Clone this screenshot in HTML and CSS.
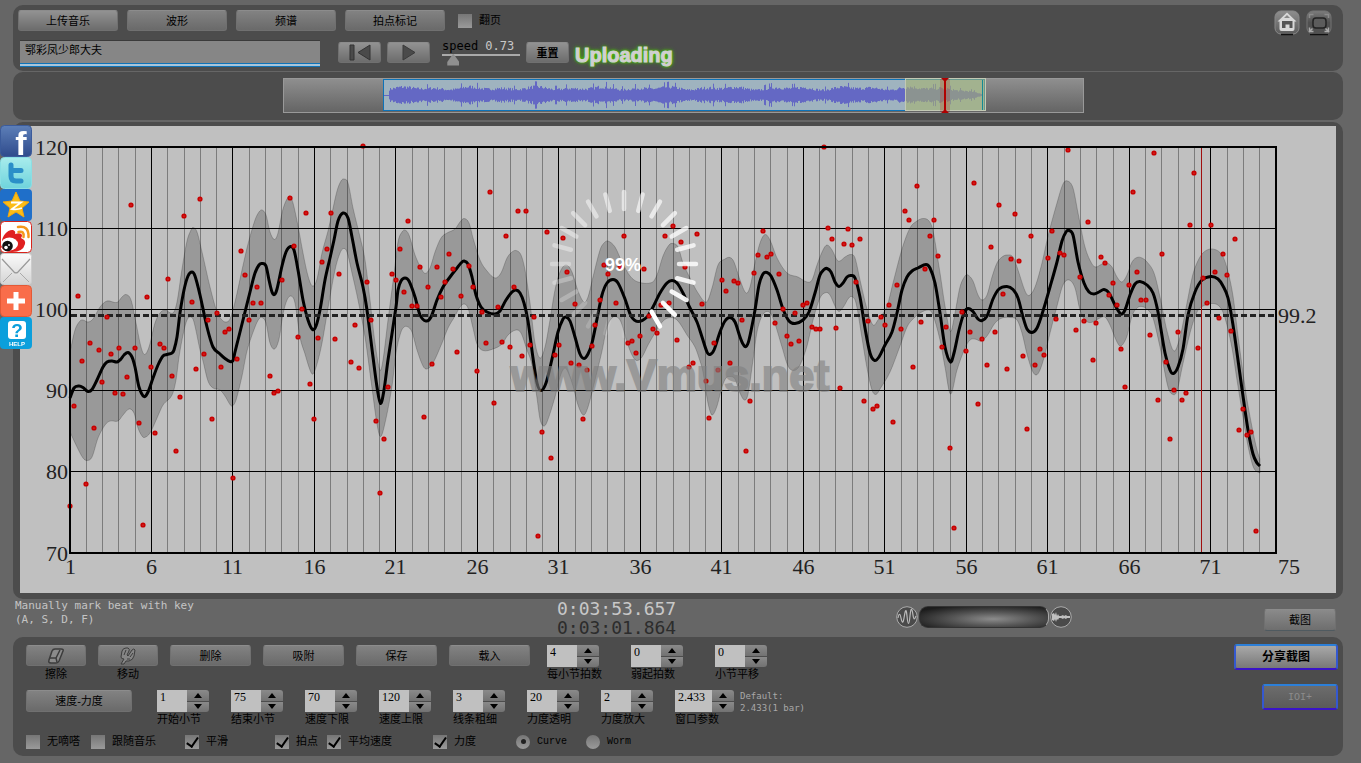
FILE: index.html
```html
<!DOCTYPE html>
<html lang="zh-CN">
<head>
  <meta charset="UTF-8">
  <title>Vmus.net</title>
  <link rel="stylesheet" href="styles.css">
</head>
<body>

<header class="panel toolbar">
  <div class="toolbar-main">
    <div class="toolbar-row">
      <button class="btn wide lit">上传音乐</button>
      <button class="btn wide">波形</button>
      <button class="btn wide">频谱</button>
      <button class="btn wide">拍点标记</button>
      <label class="check flip"><input type="checkbox">翻页</label>
    </div>
    <div class="toolbar-row second">
      <input class="track-name" type="text" value="鄂彩凤少郎大夫" aria-label="曲名">
      <div class="transport">
        <button class="btn small" aria-label="回到开头">
          <svg width="22" height="17" viewBox="0 0 22 17"><path d="M1 1h4v15h-4zM21 1v15L9 8.500z" fill="#4a4a4a" stroke="#333" stroke-width="1"/></svg>
        </button>
        <button class="btn small" aria-label="播放">
          <svg width="14" height="17" viewBox="0 0 14 17"><path d="M1 1v15L13 8.500z" fill="#4a4a4a" stroke="#3a3a3a"/></svg>
        </button>
      </div>
      <div class="speed">
        <label for="speed">speed <output>0.73</output></label>
        <input type="range" id="speed" min="0" max="100" value="8">
      </div>
      <button class="btn small bold">重置</button>
      <span class="uploading">Uploading</span>
    </div>
  </div>
  <div class="toolbar-icons">
    <button class="icon-btn" aria-label="主页">
      <svg width="26" height="26" viewBox="0 0 26 26">
        <defs><linearGradient id="gHome" x1="0" y1="0" x2="0" y2="1"><stop offset="0" stop-color="#8e8e8e"/><stop offset="1" stop-color="#5c5c5c"/></linearGradient></defs>
        <rect x="1" y="1" width="24" height="23" rx="6" fill="url(#gHome)" stroke="#888"/>
        <path d="M7 24.500h12" stroke="#111" stroke-width="1.500"/>
        <path d="M13 2.500L3.500 11.500h2v7.500q0 2 2 2h11q2 0 2-2v-7.500h2z" fill="#d8d8d8"/>
        <path d="M8 18v-7h10.500v7h-3v-3.500h-4v3.500z" fill="#555"/>
        <path d="M10 8l3-3 3 3z" fill="#888"/>
      </svg>
    </button>
    <button class="icon-btn" aria-label="全屏">
      <svg width="26" height="26" viewBox="0 0 26 26">
        <defs><linearGradient id="gFull" x1="0" y1="0" x2="0" y2="1"><stop offset="0" stop-color="#7c7c7c"/><stop offset="0.500" stop-color="#505050"/></linearGradient></defs>
        <rect x="1" y="1" width="24" height="23" rx="6" fill="url(#gFull)" stroke="#747474"/>
        <path d="M4 24.500h18" stroke="#111" stroke-width="1.500"/>
        <rect x="7" y="8" width="13" height="10" rx="3" fill="#5c5c5c" stroke="#222" stroke-width="1.500"/>
        <path d="M3.500 8V4.500h4M18.500 4.500h4V8" stroke="#8c8c8c" stroke-width="1.500" fill="none"/>
        <path d="M3.500 17.500v4h4M18.500 21.500h4v-4M3.500 21.500l3-3M22.500 21.500l-3-3" stroke="#aaa" stroke-width="1.500" fill="none"/>
      </svg>
    </button>
  </div>
</header>

<section class="panel overview">
  <svg id="overview" viewBox="0 0 801 35">
    <defs>
      <linearGradient id="gView" x1="0" y1="0" x2="0" y2="1"><stop offset="0" stop-color="#8f8f8f"/><stop offset="1" stop-color="#646464"/></linearGradient>
    </defs>
    <rect x="0.500" y="0.500" width="800" height="34" fill="url(#gView)" stroke="#999"/>
    <rect x="100.500" y="1.500" width="601" height="31" fill="#9fb3bf" stroke="#0e73b8"/>
    <path id="wave" stroke="#6468c4" stroke-width="1" fill="none"/>
    <rect x="622.500" y="0.500" width="80" height="32" fill="#a5b070" fill-opacity="0.600" stroke="#c3c9b4"/>
    <path d="M699.500 2v30" stroke="#128a96" stroke-width="1"/>
    <rect x="657" y="1" width="10" height="33" fill="#b00" fill-opacity="0.180"/>
    <path d="M658 0h8l-3 3v29l3 3h-8l3-3v-29z" fill="#b00000"/>
  </svg>
</section>

<main class="panel chart-panel">
  <svg id="chart" viewBox="20 126 1316 467">
    <g id="grid"></g>
    <path id="band"></path>
    <path id="mean"></path>
    <path class="average" d="M71 315.500H1276"/>
    <text class="axis" x="1278" y="323">99.2</text>
    <g id="beats"></g>
    <text class="watermark" x="670" y="391">www.Vmus.net</text>
    <path class="playhead" d="M1201.500 147V552"/>
    <rect class="frame" x="70" y="147" width="1206" height="406"/>
    <g id="spinner"></g>
    <text class="percent" x="623" y="271">99%</text>
  </svg>
</main>

<section class="status">
  <p class="hint">Manually mark beat with key<br>(A, S, D, F)</p>
  <p class="clock">0:03:53.657<br><span>0:03:01.864</span></p>
  <div class="zoomer">
    <svg width="22" height="22" viewBox="0 0 22 22"><circle cx="11" cy="11" r="10.300" fill="#4a4a4a" stroke="#aaa"/><path d="M2 12c1-5 2-5 3 0s2 6 3 0 2-12 3-2 2 10 3 0 2-8 3-1 2 3 3 1" fill="none" stroke="#bbb" stroke-width="1.200"/></svg>
    <div class="drum"></div>
    <svg width="22" height="22" viewBox="0 0 22 22"><circle cx="11" cy="11" r="10.300" fill="#4a4a4a" stroke="#aaa"/><path d="M2 8l2-1 1 2 1-3 1 4 1-2 1 2h2l2-1 1 1 2-1 1 1h3v2h-3l-1 1-2-1-1 1-2-1H9l-1 2-1-1-1 3-1-3-1 2-2-1z" fill="#c0c0c0"/></svg>
  </div>
  <button class="btn shot">截图</button>
</section>

<section class="panel controls">
  <div class="controls-main">
    <div class="row top">
      <div class="tool">
        <button class="btn" id="erase">
          <svg width="18" height="16" viewBox="0 0 18 16"><path d="M8 1h6q3 0 2 2l-4 10q-1 2-3 2H4q-3 0-2-3l3-9q1-2 3-2z" fill="#8a8a8a" stroke="#3c3c3c" stroke-width="1.500"/><path d="M3 10h6l4-8M9 10l1 4" fill="none" stroke="#3c3c3c" stroke-width="1.500"/></svg>
        </button>
        <label for="erase">擦除</label>
      </div>
      <div class="tool">
        <button class="btn" id="move">
          <svg width="18" height="18" viewBox="0 0 18 18"><path d="M2 17l3-5q-3 0-3-2l1-6q1-3 4-3h2q2 1 1 3L8 8l1 1 4-6q2-2 3 0l-1 6q-1 4-5 5H7l-2 3z" fill="#858585" stroke="#3c3c3c"/><path d="M5 8l2-5M11 10l3-4M8 12h3" stroke="#3c3c3c" fill="none"/></svg>
        </button>
        <label for="move">移动</label>
      </div>
      <button class="btn mid">删除</button>
      <button class="btn mid">吸附</button>
      <button class="btn mid">保存</button>
      <button class="btn mid">载入</button>
      <div class="fields first">
        <div class="field" data-id="beats-per-bar" data-value="4" data-label="每小节拍数"></div>
        <div class="field" data-id="upbeat" data-value="0" data-label="弱起拍数"></div>
        <div class="field" data-id="bar-shift" data-value="0" data-label="小节平移"></div>
      </div>
    </div>
    <div class="row">
      <button class="btn mode">速度-力度</button>
      <div class="fields">
        <div class="field" data-id="bar-start" data-value="1" data-label="开始小节"></div>
        <div class="field" data-id="bar-end" data-value="75" data-label="结束小节"></div>
        <div class="field" data-id="tempo-min" data-value="70" data-label="速度下限"></div>
        <div class="field" data-id="tempo-max" data-value="120" data-label="速度上限"></div>
        <div class="field" data-id="line-width" data-value="3" data-label="线条粗细"></div>
        <div class="field" data-id="alpha" data-value="20" data-label="力度透明"></div>
        <div class="field" data-id="gain" data-value="2" data-label="力度放大"></div>
        <div class="field long" data-id="window" data-value="2.433" data-label="窗口参数"></div>
      </div>
      <p class="default">Default:<br>2.433(1 bar)</p>
    </div>
    <div class="options">
      <label class="check"><input type="checkbox">无嘀嗒</label>
      <label class="check"><input type="checkbox">跟随音乐</label>
      <label class="check"><input type="checkbox" checked>平滑</label>
      <label class="check"><input type="checkbox" checked>拍点</label>
      <label class="check"><input type="checkbox" checked>平均速度</label>
      <label class="check"><input type="checkbox" checked>力度</label>
      <label class="check"><input type="radio" name="view" checked>Curve</label>
      <label class="check"><input type="radio" name="view">Worm</label>
    </div>
  </div>
  <div class="controls-side">
    <button class="btn share">分享截图</button>
    <button class="btn ioi" disabled>IOI+</button>
  </div>
</section>

<nav class="social">
  <a href="#" aria-label="Facebook"><svg viewBox="0 0 32 32"><defs><linearGradient id="gFb" x1="0" y1="0" x2="0" y2="1"><stop offset="0" stop-color="#5d7fb8"/><stop offset="1" stop-color="#2f4b8c"/></linearGradient></defs><rect x="0.500" y="0.500" width="31" height="31" rx="4" fill="url(#gFb)" stroke="#3b5b9b"/><text x="21" y="30" class="logo-f">f</text></svg></a>
  <a href="#" aria-label="Twitter"><svg viewBox="0 0 32 32"><defs><linearGradient id="gTw" x1="0" y1="0" x2="0" y2="1"><stop offset="0" stop-color="#a8ecec"/><stop offset="1" stop-color="#6fd3dc"/></linearGradient></defs><rect x="0.500" y="0.500" width="31" height="31" rx="4" fill="url(#gTw)" stroke="#8adfe4"/><path d="M11 8v11q0 5 5 5h5M11 13.500h10" fill="none" stroke="#2b8fc8" stroke-width="5" stroke-linecap="round" stroke-linejoin="round"/></svg></a>
  <a href="#" aria-label="QZone"><svg viewBox="0 0 32 32"><rect width="32" height="32" rx="4" fill="#1f6fc9"/><path d="M16 3l4 9 9 1-7 6 2 9-8-5-8 5 2-9-7-6 9-1z" fill="#fbbd16" stroke="#f3a60c"/><path d="M11 13.500h10l-9 6.500q5 1 10-1" fill="none" stroke="#fff" stroke-width="1.800"/></svg></a>
  <a href="#" aria-label="Weibo"><svg viewBox="0 0 32 32"><rect x="0.500" y="0.500" width="31" height="31" rx="4" fill="#fff" stroke="#d8241c"/><path d="M2 20C2 15 8 8 13 9q3 1 2 4 6-2 7 1 0 2-1 3 5 2 4 6-2 8-13 8-8 0-11-5z" fill="#e02020"/><ellipse cx="9.500" cy="23" rx="8.500" ry="6.500" fill="#fff"/><circle cx="7.500" cy="25" r="5.300" fill="#111"/><circle cx="6" cy="26.500" r="1.800" fill="#fff"/><circle cx="9" cy="24" r="0.900" fill="#fff"/><path d="M18 6q11-2 10.500 10M18.500 11q6-1.500 5 5" fill="none" stroke="#f5981d" stroke-width="2.500" stroke-linecap="round"/></svg></a>
  <a href="#" aria-label="Email"><svg viewBox="0 0 32 32"><defs><linearGradient id="gMail" x1="0" y1="0" x2="0" y2="1"><stop offset="0" stop-color="#fafafa"/><stop offset="1" stop-color="#d4d4d4"/></linearGradient></defs><rect x="0.500" y="0.500" width="31" height="31" rx="3" fill="url(#gMail)" stroke="#ccc"/><path d="M3 29l9-9M29 29l-9-9" stroke="#aaa"/><path d="M2 6l12 13q2 2 4 0L30 6" fill="none" stroke="#999" stroke-width="1.200"/></svg></a>
  <a href="#" aria-label="Share"><svg viewBox="0 0 32 32"><rect x="0.500" y="0.500" width="31" height="31" rx="4" fill="#f96d4a" stroke="#e35936"/><path d="M16 7v18M7 16h18" stroke="#fff" stroke-width="5"/></svg></a>
  <a href="#" aria-label="Help"><svg viewBox="0 0 32 32"><rect width="32" height="32" rx="4" fill="#0b9fdc"/><rect x="8" y="4" width="18" height="18" rx="3" fill="#fff"/><text x="17" y="20" class="logo-q">?</text><text x="17" y="29" class="logo-help">HELP</text></svg></a>
</nav>

<script src="script.js"></script>
</body>
</html>
```
FILE: styles.css
```css
* {
  box-sizing: border-box;
}
body {
  margin: 0;
  padding: 5px 18px 7px 13px;
  background-color: #666;
  color: #000;
  font-family: "Liberation Sans", "Noto Sans CJK SC", sans-serif;
  font-size: 11px;
}
p {
  margin: 0;
}
.panel {
  background-color: #4c4c4c;
  border-radius: 10px;
}

/* buttons */
.btn {
  height: 21px;
  padding: 0;
  border: 1px solid #707070;
  border-top-color: #8c8c8c;
  border-radius: 3px;
  background: linear-gradient(#828282, #6a6a6a);
  color: #000;
  font-family: inherit;
  font-size: 11px;
  line-height: 18px;
  display: flex;
  align-items: center;
  justify-content: center;
  flex: none;
}
.wide {
  width: 100px;
}
.lit {
  background: linear-gradient(#929292, #6c6c6c);
}
.small {
  width: 43px;
  background: linear-gradient(#929292, #6c6c6c);
}
.bold {
  font-weight: bold;
}
.check {
  display: flex;
  align-items: center;
  gap: 7px;
  height: 15px;
  line-height: 15px;
  white-space: nowrap;
}
.check input {
  appearance: none;
  width: 14px;
  height: 14px;
  margin: 0;
  background: linear-gradient(#767676, #9a9a9a);
  display: grid;
  place-items: center;
}
.check input[type="checkbox"]:checked::after {
  content: "";
  width: 5px;
  height: 10px;
  border: solid #000;
  border-width: 0 2px 2px 0;
  transform: rotate(35deg);
  margin-bottom: 3px;
}
.check input[type="radio"] {
  border-radius: 50%;
}
.check input[type="radio"]:checked::after {
  content: "";
  width: 5px;
  height: 5px;
  border-radius: 50%;
  background-color: #222;
}

/* top toolbar */
.toolbar {
  height: 66px;
  padding: 5px 11px 0 5px;
  display: flex;
  justify-content: space-between;
}
.toolbar-row {
  display: flex;
  gap: 9px;
}
.flip {
  margin: 3px 0 0 4px;
}
.second {
  margin: 9px 0 0 2px;
  gap: 6px;
}
.second > .btn {
  margin-top: 2px;
}
.track-name {
  width: 300px;
  height: 27px;
  margin-right: 12px;
  padding: 0 5px 10px;
  border: 0;
  border-top: 1px solid #3a3a3a;
  background: linear-gradient(#0e73b8, #0e73b8) 0 22px / 100% 1px no-repeat,
    linear-gradient(#a8c4d8, #a8c4d8) 0 23px / 100% 2px no-repeat,
    linear-gradient(#0e73b8, #0e73b8) 0 25px / 100% 1px no-repeat, #868686;
  font-family: inherit;
  font-size: 11px;
}
.transport {
  display: flex;
  gap: 6px;
  margin: 2px 6px 0 0;
}
.speed {
  width: 78px;
}
.speed label {
  display: block;
  height: 12px;
  font: 12px/12px "DejaVu Sans Mono", monospace;
  white-space: pre;
}
.speed output {
  color: #c8c8c8;
}
.speed input {
  appearance: none;
  display: block;
  width: 100%;
  height: 13px;
  margin: 1px 0 0;
  background: linear-gradient(#aaa, #aaa) 0 1px / 100% 2px no-repeat;
}
.speed input::-webkit-slider-thumb {
  appearance: none;
  width: 12px;
  height: 12px;
  background-color: #909090;
  clip-path: polygon(50% 0, 100% 70%, 100% 100%, 0 100%, 0 70%);
}
.uploading {
  color: #d0d0d0;
  font: bold 20px/26px "Liberation Sans", sans-serif;
  margin-top: 2px;
  -webkit-text-stroke: 1px #d0d0d0;
  text-shadow: 0 0 3px #4bc800, 0 0 3px #4bc800, 0 0 5px #4bc800;
}
.toolbar-icons {
  display: flex;
  gap: 6px;
}
.icon-btn {
  width: 26px;
  height: 26px;
  padding: 0;
  border: 0;
  background: none;
}

/* waveform overview */
.overview {
  margin-top: 1px;
  padding: 6px 0 7px 11px;
}
.overview svg {
  display: block;
  width: 100%;
  max-width: 801px;
  margin: 0 auto;
}

/* tempo chart */
.chart-panel {
  margin-top: 2px;
  padding: 4px 7px 6px;
}
#chart {
  display: block;
  width: 100%;
  background-color: #c0c0c0;
}
.minor {
  stroke: #7c7c7c;
}
.major {
  stroke: #000;
}
.frame {
  fill: none;
  stroke: #000;
  stroke-width: 2px;
}
.axis {
  font: 22px "Liberation Serif", serif;
  fill: #222;
}
.y-axis {
  text-anchor: end;
}
.x-axis {
  text-anchor: middle;
}
#band {
  fill: #000;
  fill-opacity: 0.2;
  stroke: #000;
  stroke-opacity: 0.2;
}
#mean {
  fill: none;
  stroke: #000;
  stroke-width: 3px;
  stroke-linejoin: round;
}
.average {
  stroke: #222;
  stroke-width: 3px;
  stroke-dasharray: 6 3;
}
#beats circle {
  fill: #d66;
  stroke: #c80000;
  stroke-width: 2px;
}
.watermark {
  font: bold 45px "Liberation Sans", sans-serif;
  text-anchor: middle;
  fill: #808080;
  stroke: #808080;
  stroke-width: 2px;
  opacity: 0.6;
}
.playhead {
  stroke: #a01010;
}
#spinner path {
  stroke: #fff;
  stroke-width: 4.5px;
  stroke-linecap: round;
}
.percent {
  font: bold 18px "Liberation Sans", sans-serif;
  text-anchor: middle;
  fill: #fff;
}

/* clock line */
.status {
  display: grid;
  grid-template-columns: 544px 339px 1fr auto;
  height: 38px;
  padding-right: 7px;
}
.hint {
  padding-left: 2px;
  color: #c4c4c4;
  font: 11px/14px "DejaVu Sans Mono", monospace;
}
.clock {
  color: #c8c8c8;
  font: 18px/19px "DejaVu Sans Mono", monospace;
}
.clock span {
  color: #2c2c2c;
}
.zoomer {
  display: flex;
  gap: 1px;
  padding-top: 7px;
}
.drum {
  width: 130px;
  height: 22px;
  border-radius: 9px;
  border: 1px solid #333;
  border-right-color: #aaa;
  background: radial-gradient(ellipse at 57% 60%, #8c8c8c, #555 40%, #1c1c1c 85%);
}
.shot {
  width: 72px;
  height: 22px;
  margin-top: 10px;
  background: linear-gradient(#8a8a8a, #6e6e6e);
  border-bottom-color: #4f5a60;
}

/* bottom controls */
.controls {
  height: 119px;
  padding: 8px 5px 0 13px;
  display: flex;
  justify-content: space-between;
}
.row {
  display: flex;
  gap: 13px;
  height: 45px;
}
.row.top {
  gap: 12px;
}
.tool {
  text-align: center;
}
.tool .btn {
  width: 60px;
}
.tool label {
  line-height: 16px;
}
.mid {
  width: 81px;
}
.mode {
  width: 106px;
  height: 22px;
}
.fields {
  display: flex;
  gap: 22px;
  margin-left: 12px;
}
.fields.first {
  gap: 32px;
  margin-left: 5px;
}
.field {
  width: 52px;
  white-space: nowrap;
}
.field.long {
  width: 59px;
}
.field label {
  display: block;
  line-height: 14px;
}
.spin {
  display: flex;
  height: 22px;
}
.spin input {
  appearance: textfield;
  flex: 1;
  min-width: 0;
  height: 22px;
  padding: 0 0 8px 3px;
  border: 0;
  background-color: #c0c0c0;
  font: 12px "Liberation Serif", serif;
}
.spin input::-webkit-inner-spin-button {
  display: none;
}
.arrows {
  width: 22px;
  display: flex;
  flex-direction: column;
  gap: 1px;
}
.arrows button {
  flex: 1;
  padding: 0;
  border: 0;
  border-radius: 0 3px 0 0;
  background: linear-gradient(#8a8a8a, #727272);
  display: grid;
  place-items: center;
}
.arrows button + button {
  border-radius: 0 0 3px 0;
}
.arrows svg {
  display: block;
}
.default {
  margin-left: -7px;
  color: #a8a8a8;
  font: 9px/12px "DejaVu Sans Mono", monospace;
}
.options {
  display: grid;
  grid-template-columns: 65px 94px 90px 52px 106px 83px 70px 60px;
  margin-top: -1px;
}
.options .check:nth-child(n+7) {
  font-family: "Liberation Mono", monospace;
  font-size: 10px;
}
.controls-side {
  display: flex;
  flex-direction: column;
  align-items: flex-end;
  gap: 14px;
  margin-top: -1px;
}
.share, .ioi {
  width: 104px;
  height: 26px;
  border: 2px solid;
  border-color: #2c7fd8 #3458d0 #3a14c8;
  background: linear-gradient(#a8a8a8, #787878);
  font-size: 12px;
  font-weight: bold;
}
.ioi {
  width: 76px;
  background: linear-gradient(#6c6c6c, #5a5a5a);
  color: #8c8c8c;
  font: 10px "Liberation Mono", monospace;
}

/* share icons pinned to the window edge */
.social {
  position: fixed;
  left: 0;
  top: 125px;
  width: 32px;
}
.social a, .social svg {
  display: block;
  width: 32px;
  height: 32px;
  overflow: visible;
}
.logo-f {
  font: bold 34px "Liberation Sans", sans-serif;
  text-anchor: middle;
  fill: #fff;
}
.logo-q {
  font: bold 19px "Liberation Sans", sans-serif;
  text-anchor: middle;
  fill: #0b9fdc;
}
.logo-help {
  font: bold 6px "Liberation Sans", sans-serif;
  text-anchor: middle;
  fill: #fff;
}
```
FILE: script.js
```js
const NS = "http://www.w3.org/2000/svg";

// plot area inside the chart's viewBox
const LEFT = 70, TOP = 147, RIGHT = 1276, BOTTOM = 553;
const BAR = (RIGHT - LEFT) / 74;

// x, y pairs
const mean = [
  70,398, 74,388, 79,386, 83,387.5, 88,391.5, 92,389.5, 97,380, 103,367, 107,362, 112,361, 117,362,
  121,359, 124,355, 128,352.5, 132,357, 135,367, 139,387, 144,396.5, 148,392, 153,378, 158,365,
  163,356, 167,354.5, 172,353, 174,350, 177,337, 180,313, 184,290, 188,276, 192,272, 195,276,
  200,295, 207,327, 213,347, 220,354, 225,358.5, 230,361.5, 233,360.5, 235,352, 238,340, 245,312,
  250,292, 255,273, 259,265, 262,263.5, 266,266, 269,280, 272,292, 274.5,294.5, 277,289, 282,266,
  286,252, 290.5,246.5, 294,250, 298,270, 303,300, 308,320, 312.5,329.5, 316,326, 320,310, 325,280,
  330,258, 334,240, 338,221, 343,213, 348,218, 352,237, 357,263, 363,287, 367,310, 373,357,
  377,387, 380.5,403.5, 384,390, 388,360, 396,307, 398,290, 401,281, 405,278, 409,281, 415,297,
  420,315, 426,321, 431,317, 437,300, 443,287, 450,277, 457,268, 461,263, 464,261, 468,264,
  472,277, 476,295, 481,307, 487,312, 495,314, 500,311, 506,300, 512,292, 516,290, 520,293,
  524,303, 528,321, 533,358, 537,383, 541,390.5, 546,383, 552,359, 558,332, 563,319, 566,317,
  570,321, 575,337, 580,354, 584,358.5, 588,354, 592,343, 597,319, 602,295, 607,283, 613,279.5,
  618,283, 625,299, 631,316, 638,321.5, 647,317, 653,307, 660,293, 667,283, 672,280.5, 677,283,
  683,293, 689,306, 697,322, 702,337, 707,352, 710,354.5, 714,350, 720,332, 725,321, 730,317.5,
  735,322, 740,337, 743,344, 746,346.5, 749,340, 755,310, 759,285, 763,274, 767,272.5, 771,276,
  777,290, 783,309, 789,321, 795,323.5, 803,320, 809,312, 815,293, 820,275, 824,269.5, 827,268.5,
  831,272, 835,282, 839,286.5, 843,283, 847,277, 851,275.5, 855,278, 860,297, 865,328, 870,353,
  874.5,360.5, 879,357, 885,345, 892,332, 897,313, 902,290, 907,277, 912,271, 918,268, 926,264.5,
  930,268, 935,283, 940,313, 945,347, 950.5,362, 954,353, 959,330, 964,313, 968,308.5, 973,311.5,
  978,319, 982,320.5, 987,316, 993,299, 999,289, 1007,286.5, 1013,289.5, 1018,298, 1023,317,
  1027,329, 1032,332.5, 1037,328, 1043,311, 1050,287, 1057,262, 1062,241, 1066,232, 1069,230.5,
  1073,235, 1078,262, 1084,283, 1089,292, 1094,294, 1099,292, 1104,289.5, 1109,293, 1115,305,
  1121,314, 1125,310, 1130,295, 1135,284, 1140,281.5, 1147,285, 1153,293, 1158,312, 1165,353,
  1170,370, 1173.5,373.5, 1178,367, 1183,349, 1188,315, 1195,292, 1202,280, 1211,276.5, 1218,279,
  1223,286, 1228,298, 1233,325, 1242,389, 1248,430, 1253,454, 1257,463, 1260,466
];

const upper = [
  70,352, 75,330, 80,321, 83,320, 88,322, 93,319, 100,307, 107,301, 117,302.5, 122,297, 126,294.5,
  131,300, 136,323, 141,347, 144.5,354.5, 149,347, 155,323, 160,313, 165,310, 173,313, 177,302,
  182,269, 187,241, 191,230, 193,227.5, 197,232, 202,252, 210,287, 217,312, 222,320, 226,322,
  230,319, 235,302, 242,270, 248,244, 255,220, 259,212, 262,210, 266,215, 270,232, 274.5,239.5,
  278,233, 283,209, 289.5,196, 293,203, 298,226, 303,253, 308,276, 312.5,286, 317,279, 322,253,
  328,231, 332,213, 337,191, 341,181, 344,179, 348,183, 353,208, 360,237, 365,260, 370,300,
  375,343, 380,370, 383,360, 388,320, 394,274, 398,242, 402,232, 405,230, 409,235, 415,255,
  421,268, 425,273.5, 430,268, 435,252, 441,238, 447,233, 455,229, 460,222, 464,218.5, 469,223,
  473,238, 480,260, 487,271, 495,278, 501,273, 507,258, 512,252, 516,250.5, 521,255, 525,270,
  530,303, 535,343, 540,358, 545,347, 550,320, 555,290, 560,272, 566,265, 572,272, 578,291,
  584,302, 588,297, 593,277, 600,250, 604,243, 608,241, 615,247, 622,262, 630,276, 638,282,
  652,282.5, 657,275, 663,256, 669,245, 673,243.5, 678,247, 683,263, 690,278, 698,293, 706.5,302,
  712,288, 718,265, 725,259, 730,257.5, 734,262, 740,280, 746,293, 750,287, 755,263, 760,243,
  765,234.5, 770,240, 777,258, 787,273, 798,277, 807,282, 812,280, 817,265, 823,250, 827,245,
  832,250, 837,260, 840,261, 845,257, 851,254.5, 855,258, 860,280, 867,309, 873,325, 878,320,
  887,306, 893,283, 902,249, 910,228, 917,221, 923,218.5, 929,221, 933,231, 940,273, 945,306,
  950.5,331.5, 955,313, 960,287, 965,276, 968,275, 973,281, 978,295, 982,300, 987,295, 992,277,
  997,263, 1002,257, 1007,255, 1013,257, 1018,270, 1025,291, 1029,295.5, 1035,287, 1042,263,
  1048,236, 1057,203, 1063,184, 1067.5,181, 1073,188, 1078,213, 1085,247, 1092,264, 1096,267,
  1102,264, 1107,263, 1112,267, 1117,277, 1122,282, 1127,275, 1132,262, 1137,257.5, 1142,258,
  1147,262, 1154,273, 1160,297, 1167,331, 1174,351, 1180,337, 1187,303, 1193,274, 1200,257,
  1207,250, 1215,249.5, 1222,255, 1227,268, 1233,296, 1238,336, 1245,387, 1247,400, 1252,427,
  1257,450, 1260,459
];

const lower = [
  70,432, 77,447, 83,458, 87,460.5, 92,457, 98,438, 105,425, 110,421, 118,421, 123,415, 129,409,
  134,413, 138,428, 142,436, 144.5,437.5, 150,433, 157,418, 163,405, 172,395, 176,380, 179,357,
  183,335, 187,320, 191,317, 194,322, 200,350, 203,361, 208,381, 213,388, 220,390, 225,396,
  230,404.5, 232.5,406, 236,400, 242,376, 247,351, 255,327, 259,319, 262,317.5, 266,323, 270,343,
  274.5,349, 279,339, 283,314, 287,300, 291,296, 295,303, 300,337, 305,354, 310,370, 313,374,
  317,364, 322,343, 328,308, 335,270, 340,253, 343.5,248.5, 347,252, 352,273, 358,300, 365,337,
  372,388, 377,424, 380.5,436.5, 385,423, 392,386, 396,353, 400,335, 403,328, 407,326.5, 412,332,
  417,350, 423,366, 427,369, 433,363, 442,343, 448,328, 455,316, 460,307, 464,304, 468,308,
  473,328, 477,344, 483,350.5, 493,349, 502,344, 508,335, 516,330, 521,333, 527,350, 532,365,
  537,398, 540,419, 543.5,426, 547,422, 555,397, 560,377, 564,368.5, 567,370, 573,386, 578,405,
  583.5,415, 588,407, 595,380, 602,351, 607,327, 612,318, 616,316.5, 621,322, 627,342, 632,355,
  636.5,360.5, 642,357, 648,345, 655,333, 663,321, 671,317.5, 678,321, 687,335, 695,347, 700,361,
  703,372, 707,398, 710,411, 712.5,415, 717,406, 722,387, 726,378, 730,376.5, 735,379, 740,393,
  744.5,400, 748,394, 753,360, 757,332, 762,316, 768,311.5, 773,318, 782,347, 788,366, 794,370.5,
  800,365, 807,346, 813,320, 820,298, 826,292.5, 830,295, 835,306, 839,311.5, 844,306, 848,299,
  851.5,296.5, 856,303, 862,338, 867,368, 872,390, 876,394.5, 880,389, 890,372, 900,346, 907,327,
  912,320, 920,313, 929,310, 933,315, 940,340, 945,367, 950.5,394, 957,370, 965,348, 970,340,
  975,339, 981,341, 987,336, 995,323, 1002,318, 1010,317.5, 1017,320, 1022,333, 1027,354,
  1032,370, 1036,375, 1040,370, 1045,354, 1050,333, 1057,306, 1063,285, 1069,280, 1075,288,
  1080,310, 1085,320, 1091,322.5, 1100,318, 1105,317, 1110,325, 1117,342, 1121,346, 1127,336,
  1132,316, 1137,308, 1142,306.5, 1148,310, 1153,318, 1160,347, 1168,387, 1173,394.5, 1177,391,
  1182,368, 1190,333, 1197,312, 1203,306, 1213,303.5, 1220,307, 1225,318, 1232,348, 1237,380,
  1242,411, 1247,441, 1252,463, 1255,470, 1260,473
];

const beats = [
  70,506, 74,406, 78,296, 82,361, 86,484, 90,343, 94,428, 99,350, 102,382, 107,317, 111,354, 115,393,
  119,348, 123,394, 127,377, 131,205, 135,348, 139,423, 143,525, 147,297, 151,367, 155,433, 160,344,
  164,348, 168,279, 172,376, 176,451, 180,397, 184,216, 192,302, 196,369, 200,199, 204,354, 208,320,
  212,419, 217,313, 221,367, 225,332, 229,329, 233,478, 237,359, 241,251, 245,275, 249,320, 253,303,
  257,287, 261,303, 270,376, 274,393, 278,391, 282,280, 290,198, 294,246, 298,337, 302,309, 306,213,
  310,384, 314,419, 318,338, 322,262, 327,249, 331,213, 335,339, 339,274, 351,362, 355,325, 359,368,
  363,146, 367,282, 371,320, 376,421, 380,493, 384,439, 388,387, 392,274, 396,280, 400,249, 404,292,
  408,221, 412,306, 417,306, 420,267, 424,417, 428,287, 432,364, 437,267, 441,297, 445,282, 449,254,
  453,269, 457,352, 461,296, 469,266, 473,287, 477,371, 482,312, 486,343, 490,192, 494,403, 498,307,
  502,342, 506,236, 510,347, 514,287, 518,211, 522,356, 526,211, 530,345, 534,317, 538,536, 542,432,
  547,232, 551,458, 555,355, 559,345, 563,238, 567,272, 571,363, 575,304, 579,365, 583,419, 587,370,
  592,346, 595,325, 600,300, 604,265, 608,274, 616,303, 620,267, 624,236, 628,343, 632,341, 636,353,
  640,336, 644,269, 649,316, 653,329, 657,333, 661,305, 665,236, 669,303, 673,226, 677,340, 681,242,
  685,267, 689,367, 693,363, 697,234, 702,304, 706,381, 709,418, 714,343, 718,370, 722,280, 726,291,
  730,363, 734,281, 738,283, 742,320, 746,451, 750,401, 754,273, 758,255, 763,231, 767,257, 771,254,
  775,323, 779,274, 783,309, 787,336, 791,344, 795,313, 799,341, 803,305, 807,303, 812,327, 816,329,
  820,329, 824,147, 828,228, 832,239, 836,328, 840,388, 844,244, 848,229, 852,245, 856,282, 860,239,
  864,401, 868,321, 873,409, 877,406, 881,317, 885,325, 889,305, 893,422, 897,285, 901,329, 905,211,
  909,220, 913,367, 917,186, 921,322, 925,269, 930,236, 934,220, 938,256, 942,347, 946,327, 950,448,
  954,528, 962,312, 966,351, 970,332, 974,183, 978,404, 982,339, 987,365, 991,247, 995,332, 999,205,
  1003,294, 1007,369, 1011,259, 1015,214, 1019,261, 1023,356, 1027,429, 1031,236, 1035,365, 1040,349,
  1044,355, 1048,258, 1052,231, 1056,319, 1060,253, 1064,255, 1068,150, 1076,330, 1080,277, 1084,321,
  1088,222, 1093,360, 1096,323, 1101,257, 1105,263, 1109,295, 1113,283, 1117,305, 1121,349, 1125,387,
  1129,285, 1133,192, 1137,272, 1141,300, 1146,300, 1150,335, 1154,153, 1158,400, 1162,254, 1166,362,
  1170,439, 1174,390, 1178,332, 1182,400, 1186,393, 1190,225, 1194,173, 1198,348, 1203,278, 1207,303,
  1211,225, 1215,272, 1219,318, 1223,254, 1227,275, 1231,331, 1235,239, 1239,430, 1243,409, 1247,435,
  1251,432, 1256,531
];

function add(parent, tag, attrs, text) {
  const el = document.createElementNS(NS, tag);
  for (const key in attrs) el.setAttribute(key, attrs[key]);
  if (text !== undefined) el.textContent = text;
  parent.appendChild(el);
  return el;
}

function toPoints(flat) {
  const pts = [];
  for (let i = 0; i < flat.length; i += 2) pts.push([flat[i], flat[i + 1]]);
  return pts;
}

// smooth curve through the points, each tangent taken from both neighbours
function curve(pts) {
  const slope = pts.map((p, i) => {
    const a = pts[Math.max(i - 1, 0)];
    const b = pts[Math.min(i + 1, pts.length - 1)];
    return (b[1] - a[1]) / (b[0] - a[0]);
  });
  let d = "";
  for (let i = 1; i < pts.length; i++) {
    const [x0, y0] = pts[i - 1], [x1, y1] = pts[i];
    const h = (x1 - x0) / 3;
    d += `C${x0 + h} ${y0 + h * slope[i - 1]} ${x1 - h} ${y1 - h * slope[i]} ${x1} ${y1}`;
  }
  return d;
}

function drawGrid() {
  const grid = document.getElementById("grid");
  for (let bar = 1; bar <= 74; bar++) {
    const x = Math.floor(LEFT + (bar - 1) * BAR) + 0.5;
    const major = bar % 5 === 1;
    add(grid, "path", { d: `M${x} ${TOP}V${BOTTOM}`, class: major ? "major" : "minor" });
    if (major) add(grid, "text", { x: x, y: 574, class: "axis x-axis" }, bar);
  }
  add(grid, "text", { x: 1289, y: 574, class: "axis x-axis" }, 75);
  for (let tempo = 70; tempo <= 120; tempo += 10) {
    const y = Math.floor(BOTTOM - (tempo - 70) * (BOTTOM - TOP) / 50) + 0.5;
    add(grid, "path", { d: `M${LEFT} ${y}H${RIGHT}`, class: "major" });
    add(grid, "text", { x: 68, y: y + 7, class: "axis y-axis" }, tempo);
  }
}

function drawTempo() {
  const up = toPoints(upper), low = toPoints(lower), mid = toPoints(mean);
  // the lower edge runs backwards to close the band
  const back = low.slice().reverse();
  document.getElementById("band").setAttribute("d",
    `M${up[0]}${curve(up)}L${back[0]}${curve(back)}Z`);
  document.getElementById("mean").setAttribute("d", `M${mid[0]}${curve(mid)}`);
  toPoints(beats).forEach(([x, y]) => {
    add(document.getElementById("beats"), "circle", { cx: x, cy: y, r: 1.6 });
  });
}

function drawWave() {
  let d = "M101 17.5H106", seed = 7;
  for (let x = 106; x < 700; x++) {
    seed = (seed * 16807) % 2147483647;
    const noise = seed / 2147483647;
    const swell = 1 + 0.25 * Math.sin(x / 7) * Math.sin(x / 23);
    const fade = x > 670 ? (704 - x) / 36 : 1;
    const amp = (5 + 3 * noise + (noise > 0.93 ? 3 : 0)) * swell * fade;
    d += `M${x + 0.5} ${(17 - amp).toFixed(1)}V${(17 + amp).toFixed(1)}`;
  }
  document.getElementById("wave").setAttribute("d", d);
}

function drawSpinner() {
  for (let i = 0; i < 24; i++) {
    const angle = 150 - i * 15;
    add(document.getElementById("spinner"), "path", {
      d: "M624 209V192",
      transform: `rotate(${angle} 624 264)`,
      opacity: (1 - i / 24).toFixed(2)
    });
  }
}

function buildFields() {
  document.querySelectorAll(".field").forEach(field => {
    const { id, value, label } = field.dataset;
    field.innerHTML = `
      <div class="spin">
        <input type="number" id="${id}" value="${value}" step="any">
        <div class="arrows">
          <button aria-label="+"><svg width="8" height="5"><path d="M0 5h8L4 0z"/></svg></button>
          <button aria-label="-"><svg width="8" height="5"><path d="M0 0h8L4 5z"/></svg></button>
        </div>
      </div>
      <label for="${id}">${label}</label>`;
  });
}

drawGrid();
drawTempo();
drawWave();
drawSpinner();
buildFields();
```
